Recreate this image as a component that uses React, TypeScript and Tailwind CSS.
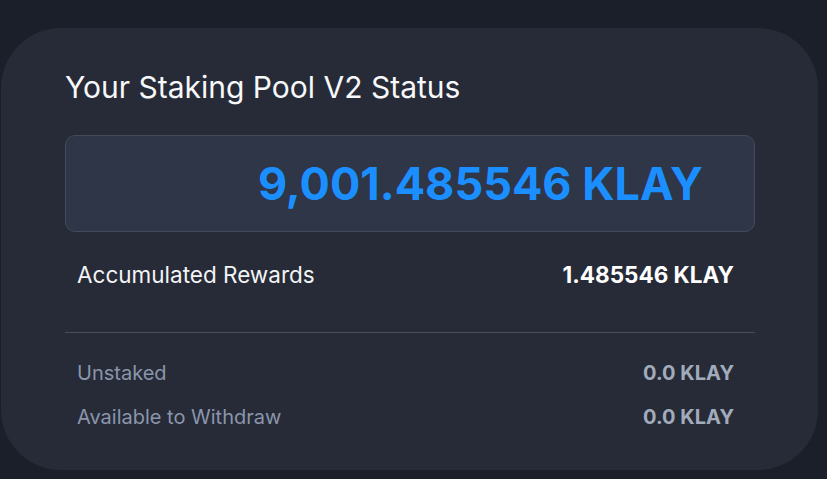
import React from 'react';

const rows = [
  { label: 'Unstaked', value: '0.0 KLAY' },
  { label: 'Available to Withdraw', value: '0.0 KLAY' },
];

const App: React.FC = () => {
  return (
    <div className="w-[827px] h-[479px] bg-[#1b1f2a] pt-[28px] pl-[1px] font-['Inter',sans-serif] overflow-hidden">
      <section className="w-[817px] h-[442px] rounded-[60px] bg-[#262b37] pl-[64px] pr-[63px] pt-[41px]">
        <h2 className="text-[30px] leading-[36px] text-[#f7f8fa] font-normal">Your Staking Pool V2 Status</h2>

        {/* total staked */}
        <div className="mt-[30px] h-[97px] rounded-[10px] border border-[#434a5a] bg-[#2e3647] flex items-center justify-end pr-[51px]">
          <span className="text-[45px] leading-none font-bold text-[#1b8fff]">9,001.485546 KLAY</span>
        </div>

        <div className="mt-[20px] h-[45px] flex items-center justify-between pl-[12px] pr-[21px]">
          <span className="text-[22.5px] text-[#f3f4f6]">Accumulated Rewards</span>
          <span className="text-[22.5px] font-bold text-white">1.485546 KLAY</span>
        </div>

        <div className="mt-[35px] h-px bg-[#474e5f]"></div>

        <div className="mt-[18px]">
          {rows.map((row) => (
            <div key={row.label} className="h-[44px] flex items-center justify-between pl-[12px] pr-[21px]">
              <span className="text-[20px] text-[#8b95ab]">{row.label}</span>
              <span className="text-[20px] font-bold text-[#a2abbc]">{row.value}</span>
            </div>
          ))}
        </div>
      </section>
    </div>
  );
};

export default App;
